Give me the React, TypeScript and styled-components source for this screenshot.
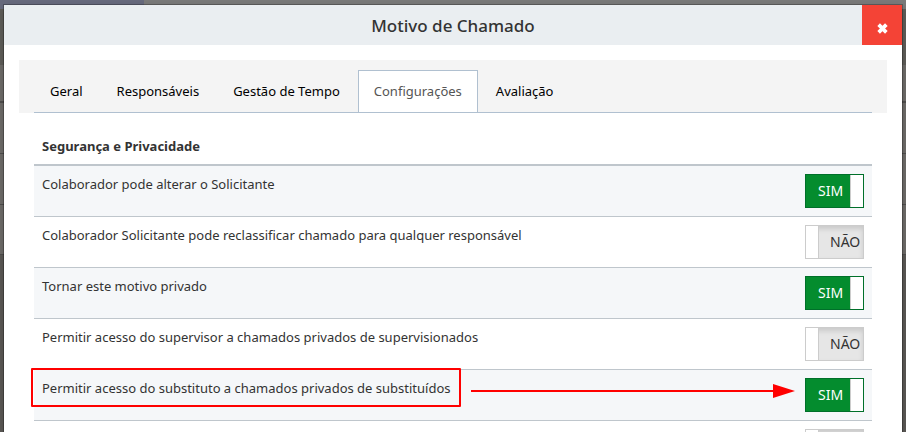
import React, { useId, useState } from "react";
import styled, { createGlobalStyle, css } from "styled-components";

const GlobalStyle = createGlobalStyle`
  *, *::before, *::after { box-sizing: border-box; }
  html, body { margin: 0; height: 100%; overflow: hidden; }
  body {
    background: #5b5956;
    color: #333;
    font: 13px/20px "Segoe UI", "Noto Sans", "Open Sans", sans-serif;
  }
  button { font: inherit; }
`;

const Page = styled.div`
  display: grid;
  height: 100vh;
  overflow: hidden;

  > * {
    grid-area: 1 / 1;
    min-width: 0;
  }
`;

const Underlay = styled.div`
  display: flex;
  flex-direction: column;
`;

const TopBar = styled.div`
  display: flex;
  height: 9px;
  background: #7a7a7a;
`;

const TopBarItem = styled.div`
  width: 144px;
  background: #676a7d;
`;

const UnderlaySpace = styled.div`
  height: 56px;
  background: #5f5d59;
`;

const UnderlayRow = styled.div<{ $strong?: boolean; $height: number }>`
  height: ${(p) => p.$height}px;
  background: #6e6c69;
  border-bottom: ${(p) => (p.$strong ? 2 : 1)}px solid #4f4e4d;
`;

const Dialog = styled.section`
  display: flex;
  flex-direction: column;
  margin: 5px 4px 0;
  background: #fff;
  box-shadow: 0 0 0 1px rgba(0, 0, 0, 0.25), 0 3px 9px rgba(0, 0, 0, 0.2);
  overflow: hidden;
`;

const Header = styled.header`
  display: grid;
  grid-template-columns: 1fr 40px;
  grid-template-rows: 40px;
  flex: none;
  background: #eaeef1;
`;

const Title = styled.h1`
  margin: 0;
  padding: 2px 0 0 40px;
  text-align: center;
  font-size: 17px;
  font-weight: 500;
  line-height: 38px;
  color: #333;
`;

const CloseButton = styled.button`
  display: flex;
  align-items: center;
  justify-content: center;
  padding: 6px 0 0;
  border: 0;
  background: #f44336;
  color: #fff;
  cursor: pointer;
`;

const Body = styled.div`
  flex: 1;
  min-height: 0;
  padding: 15px;
`;

const TabStrip = styled.div`
  padding: 10px 15px 0;
  background: #f4f4f4;
`;

const Tabs = styled.div`
  display: flex;
  border-bottom: 1px solid #b0c0d0;
`;

const Tab = styled.button<{ $active: boolean }>`
  height: 42px;
  padding: 0 15px 2px;
  border: 1px solid transparent;
  border-bottom: 0;
  margin-right: 2px;
  background: transparent;
  color: #000;
  cursor: pointer;

  ${(p) =>
    p.$active &&
    css`
      background: #fff;
      border-color: #b0c0d0;
      color: #555;
    `}
`;

const Panel = styled.div`
  padding: 15px 15px 0;
`;

const SettingsTable = styled.table`
  width: 100%;
  border-collapse: separate;
  border-spacing: 0;
`;

const HeadCell = styled.th`
  height: 38px;
  padding: 8px;
  border-bottom: 2px solid #bfc6cc;
  text-align: left;
  font-weight: 700;
`;

const Row = styled.tr`
  &:nth-child(odd) { background: #f5f7f9; }
`;

const LabelCell = styled.td`
  position: relative;
  padding: 8px;
  border-bottom: 1px solid #bfc6cc;
  vertical-align: top;
`;

const SwitchCell = styled.td`
  width: 75px;
  height: 51px;
  padding: 8px;
  border-bottom: 1px solid #bfc6cc;
  vertical-align: top;
`;

const RowLabel = styled.label<{ $marked?: boolean }>`
  position: relative;
  display: inline-block;

  ${(p) =>
    p.$marked &&
    css`
      &::after {
        content: "";
        position: absolute;
        inset: -10px -10px -9px -11px;
        border: 2px solid #f00;
        border-radius: 1px;
        pointer-events: none;
      }
    `}
`;

const Arrow = styled.div`
  position: absolute;
  left: 437px;
  right: 2px;
  top: 14px;
  display: flex;
  align-items: center;
  pointer-events: none;
`;

const ArrowLine = styled.span`
  flex: 1;
  height: 2px;
  background: #f00;
`;

const Switch = styled.span<{ $on: boolean }>`
  position: relative;
  display: flex;
  flex-direction: ${(p) => (p.$on ? "row" : "row-reverse")};
  width: 59px;
  height: 34px;
  border: 1px solid ${(p) => (p.$on ? "#00702a" : "#ccc")};
  background: ${(p) => (p.$on ? "#048c2e" : "#e6e6e6")};
  color: ${(p) => (p.$on ? "#fff" : "#333")};
  font-size: 14px;
  line-height: 32px;
  box-shadow: ${(p) => (p.$on ? "none" : "inset 0 3px 5px rgba(0, 0, 0, 0.125)")};

  &:focus-within { outline: 2px solid #6aa9e0; }
`;

const SwitchInput = styled.input`
  position: absolute;
  inset: 0;
  width: 100%;
  height: 100%;
  margin: 0;
  opacity: 0;
  cursor: pointer;
`;

const SwitchText = styled.span<{ $on: boolean }>`
  flex: 1;
  padding-left: ${(p) => (p.$on ? 12 : 11)}px;
`;

const Knob = styled.span<{ $on: boolean }>`
  width: 13px;
  background: #fff;
  border: solid #ccc;
  border-width: ${(p) => (p.$on ? "0 0 0 1px" : "0 1px 0 0")};
`;

const TABS = ["Geral", "Responsáveis", "Gestão de Tempo", "Configurações", "Avaliação"];

const SETTINGS = [
  { label: "Colaborador pode alterar o Solicitante", on: true },
  { label: "Colaborador Solicitante pode reclassificar chamado para qualquer responsável", on: false },
  { label: "Tornar este motivo privado", on: true },
  { label: "Permitir acesso do supervisor a chamados privados de supervisionados", on: false },
  { label: "Permitir acesso do substituto a chamados privados de substituídos", on: true, marked: true },
  { label: "", on: false },
];

function SettingRow({ label, initial, marked }: { label: string; initial: boolean; marked?: boolean }) {
  const id = useId();
  const [on, setOn] = useState(initial);
  return (
    <Row>
      <LabelCell>
        <RowLabel htmlFor={id} $marked={marked}>{label}</RowLabel>
        {marked && (
          <Arrow aria-hidden="true">
            <ArrowLine />
            <svg width="22" height="14" viewBox="0 0 22 14">
              <path d="M0 0 L22 7 L0 14 Z" fill="#f00" />
            </svg>
          </Arrow>
        )}
      </LabelCell>
      <SwitchCell>
        <Switch $on={on}>
          <SwitchText $on={on}>{on ? "SIM" : "NÃO"}</SwitchText>
          <Knob $on={on} />
          <SwitchInput id={id} type="checkbox" checked={on} onChange={(e) => setOn(e.target.checked)} />
        </Switch>
      </SwitchCell>
    </Row>
  );
}

export default function App() {
  const [active, setActive] = useState("Configurações");
  return (
    <>
      <GlobalStyle />
      <Page>
        <Underlay aria-hidden="true">
          <TopBar><TopBarItem /></TopBar>
          <UnderlaySpace />
          <UnderlayRow $strong $height={38} />
          <UnderlayRow $height={51} />
          <UnderlayRow $height={51} />
          <UnderlayRow $height={50} />
        </Underlay>
        <Dialog role="dialog" aria-labelledby="dialog-title">
          <Header>
            <Title id="dialog-title">Motivo de Chamado</Title>
            <CloseButton type="button" aria-label="Fechar">
              <svg width="11" height="11" viewBox="0 0 12 12" fill="none" stroke="currentColor" strokeWidth="4" strokeLinejoin="round">
                <path d="M1.8 1.8 L10.2 10.2 M10.2 1.8 L1.8 10.2" />
              </svg>
            </CloseButton>
          </Header>
          <Body>
            <TabStrip>
              <Tabs role="tablist">
                {TABS.map((tab) => (
                  <Tab key={tab} type="button" role="tab" aria-selected={tab === active} $active={tab === active} onClick={() => setActive(tab)}>
                    {tab}
                  </Tab>
                ))}
              </Tabs>
            </TabStrip>
            <Panel role="tabpanel">
              <SettingsTable>
                <thead>
                  <tr><HeadCell colSpan={2} scope="colgroup">Segurança e Privacidade</HeadCell></tr>
                </thead>
                <tbody>
                  {SETTINGS.map((s, i) => (
                    <SettingRow key={i} label={s.label} initial={s.on} marked={s.marked} />
                  ))}
                </tbody>
              </SettingsTable>
            </Panel>
          </Body>
        </Dialog>
      </Page>
    </>
  );
}
